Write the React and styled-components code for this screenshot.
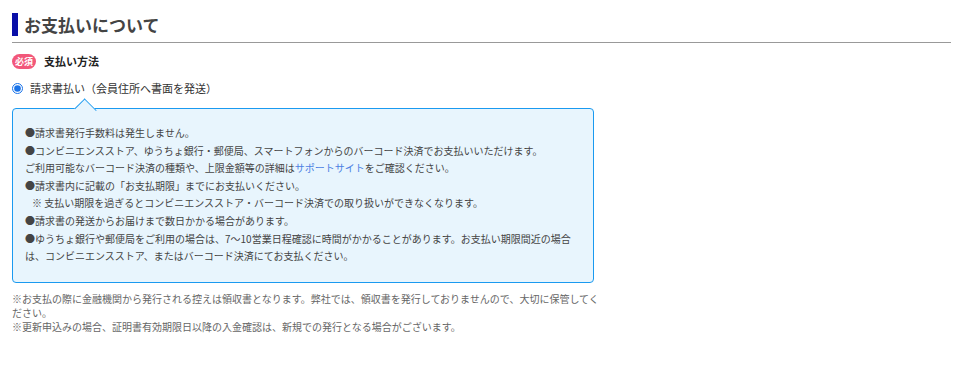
import React from 'react';
import styled, { createGlobalStyle } from 'styled-components';

const GlobalStyle = createGlobalStyle`
  body {
    margin: 0;
    background: #fff;
    font-family: "Noto Sans CJK JP", "Noto Sans", sans-serif;
    color: #333;
  }
`;

const Page = styled.div`
  padding: 12px 14px 0 12px;
`;

const Heading = styled.h2`
  display: flex;
  align-items: center;
  gap: 6px;
  margin: 0;
  padding: 0 0 5px 0;
  border-bottom: 1px solid #999;
  font-size: 17px;
  font-weight: 700;
  color: #444;
  line-height: 25px;
  &::before {
    content: "";
    width: 6px;
    height: 23px;
    background: #0a0fa8;
  }
`;

const LabelRow = styled.div`
  display: flex;
  align-items: center;
  gap: 8px;
  margin-top: 9px;
  height: 18px;
`;

const Badge = styled.span`
  display: inline-flex;
  align-items: center;
  justify-content: center;
  width: 24px;
  height: 15px;
  border-radius: 8px;
  background: #f2577a;
  color: #fff;
  font-size: 9px;
  font-weight: 700;
  line-height: 1;
`;

const Label = styled.span`
  font-size: 11px;
  font-weight: 700;
  color: #222;
`;

const RadioRow = styled.label`
  display: flex;
  align-items: center;
  gap: 7px;
  margin-top: 9px;
  font-size: 11px;
  color: #333;
  line-height: 18px;
`;

const Radio = styled.input`
  margin: 0;
  width: 11px;
  height: 11px;
  accent-color: #1a73e8;
`;

const InfoBox = styled.div`
  position: relative;
  width: 548px;
  margin-top: 11px;
  padding: 15px 20px 17px 12px;
  border: 1px solid #1a9af0;
  border-radius: 4px;
  background: #e8f5fd;
  font-size: 10px;
  line-height: 17.6px;
  color: #444;
  &::before {
    content: "";
    position: absolute;
    left: 64px;
    top: -8px;
    width: 16px;
    height: 16px;
    background: #e8f5fd;
    border-top: 1px solid #1a9af0;
    border-left: 1px solid #1a9af0;
    transform: rotate(45deg) scaleY(0.85);
  }
`;

const Line = styled.p`
  margin: 0;
  padding-left: ${p => (p.$indent ? '7px' : '0')};
`;

const Link = styled.a`
  color: #4b7fe3;
  text-decoration: none;
`;

const Notes = styled.div`
  width: 620px;
  margin-top: 9px;
  font-size: 10px;
  line-height: 14px;
  color: #666;
`;

const Note = styled.p`
  margin: 0;
`;

export default function App() {
  return (
    <>
      <GlobalStyle />
      <Page>
        <Heading>お支払いについて</Heading>
        <LabelRow>
          <Badge>必須</Badge>
          <Label>支払い方法</Label>
        </LabelRow>
        <RadioRow>
          <Radio type="radio" name="pay" defaultChecked />
          請求書払い（会員住所へ書面を発送）
        </RadioRow>
        <InfoBox>
          <Line>●請求書発行手数料は発生しません。</Line>
          <Line>●コンビニエンスストア、ゆうちょ銀行・郵便局、スマートフォンからのバーコード決済でお支払いいただけます。</Line>
          <Line>ご利用可能なバーコード決済の種類や、上限金額等の詳細は<Link href="#">サポートサイト</Link>をご確認ください。</Line>
          <Line>●請求書内に記載の「お支払期限」までにお支払いください。</Line>
          <Line $indent>※ 支払い期限を過ぎるとコンビニエンスストア・バーコード決済での取り扱いができなくなります。</Line>
          <Line>●請求書の発送からお届けまで数日かかる場合があります。</Line>
          <Line>●ゆうちょ銀行や郵便局をご利用の場合は、7～10営業日程確認に時間がかかることがあります。お支払い期限間近の場合<br />は、コンビニエンスストア、またはバーコード決済にてお支払ください。</Line>
        </InfoBox>
        <Notes>
          <Note>※お支払の際に金融機関から発行される控えは領収書となります。弊社では、領収書を発行しておりませんので、大切に保管してく<br />ださい。</Note>
          <Note>※更新申込みの場合、証明書有効期限日以降の入金確認は、新規での発行となる場合がございます。</Note>
        </Notes>
      </Page>
    </>
  );
}
